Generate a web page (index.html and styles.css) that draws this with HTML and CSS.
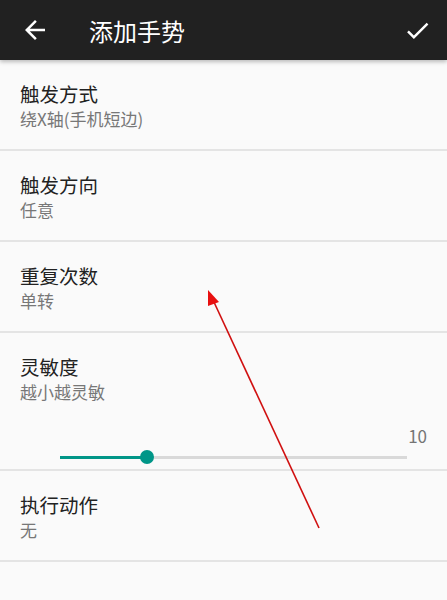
FILE: index.html
```html
<!DOCTYPE html>
<html lang="zh">
<head>
  <meta charset="UTF-8" />
  <title>添加手势</title>
  <link rel="stylesheet" href="styles.css">
</head>
<body>
  <header class="toolbar">
    <svg class="icon back" viewBox="0 0 24 24"><path d="M20 11H7.83l5.59-5.59L12 4l-8 8 8 8 1.41-1.41L7.83 13H20v-2z"/></svg>
    <h1>添加手势</h1>
    <svg class="icon done" viewBox="0 0 24 24"><path d="M9 16.17L4.83 12l-1.42 1.41L9 19 21 7l-1.41-1.41z"/></svg>
  </header>

  <main class="list">
    <div class="pref">
      <div class="title">触发方式</div>
      <div class="summary">绕X轴(手机短边)</div>
    </div>
    <div class="pref">
      <div class="title">触发方向</div>
      <div class="summary">任意</div>
    </div>
    <div class="pref">
      <div class="title">重复次数</div>
      <div class="summary">单转</div>
    </div>
    <div class="pref pref-seek">
      <div class="title">灵敏度</div>
      <div class="summary">越小越灵敏</div>
      <div class="seek-value">10</div>
      <div class="seekbar">
        <div class="track"><div class="fill" style="width: 25%"></div></div>
        <div class="thumb" style="left: 25%"></div>
      </div>
    </div>
    <div class="pref">
      <div class="title">执行动作</div>
      <div class="summary">无</div>
    </div>
  </main>

  <svg class="annotation" width="447" height="600" viewBox="0 0 447 600">
    <line x1="319" y1="528" x2="213" y2="300" stroke="#d01010" stroke-width="1.6"/>
    <polygon points="208,290 219,302 208,306" fill="#e81010"/>
  </svg>
</body>
</html>
```

FILE: styles.css
```css
* {
  box-sizing: border-box;
  margin: 0;
  padding: 0;
}

body {
  background: #fafafa;
  font-family: 'Noto Sans CJK SC', 'Noto Sans', sans-serif;
  width: 447px;
  height: 600px;
  overflow: hidden;
  position: relative;
}

.toolbar {
  height: 60px;
  background: #212121;
  display: flex;
  align-items: center;
  color: #fff;
  box-shadow: 0 2px 4px rgba(0, 0, 0, 0.25);
  position: relative;
  z-index: 1;
}

.toolbar h1 {
  font-size: 24px;
  font-weight: 400;
  margin-left: 39px;
  flex: 1;
}

.icon {
  fill: #fff;
  width: 30px;
  height: 30px;
}

.back {
  margin-left: 20px;
}

.done {
  width: 29px;
  height: 29px;
  margin-right: 15px;
}

.pref {
  height: 91px;
  padding: 21px 20px 0;
  border-bottom: 2px solid #e4e4e4;
}

.title {
  font-size: 19.5px;
  line-height: 26px;
  color: #222;
}

.summary {
  font-size: 17px;
  line-height: 23px;
  color: #777;
}

.pref-seek {
  height: 138px;
}

.seek-value {
  text-align: right;
  font-size: 17px;
  line-height: 20px;
  color: #757575;
  margin-top: 23px;
}

.seekbar {
  position: relative;
  height: 20px;
  margin: 1px 20px 0 40px;
  display: flex;
  align-items: center;
}

.track {
  width: 100%;
  height: 3px;
  background: #d9d9d9;
}

.fill {
  height: 100%;
  background: #009688;
}

.thumb {
  position: absolute;
  top: 3px;
  width: 14px;
  height: 14px;
  margin-left: -7px;
  border-radius: 50%;
  background: #009688;
}

.annotation {
  position: absolute;
  left: 0;
  top: 0;
  pointer-events: none;
}
```
